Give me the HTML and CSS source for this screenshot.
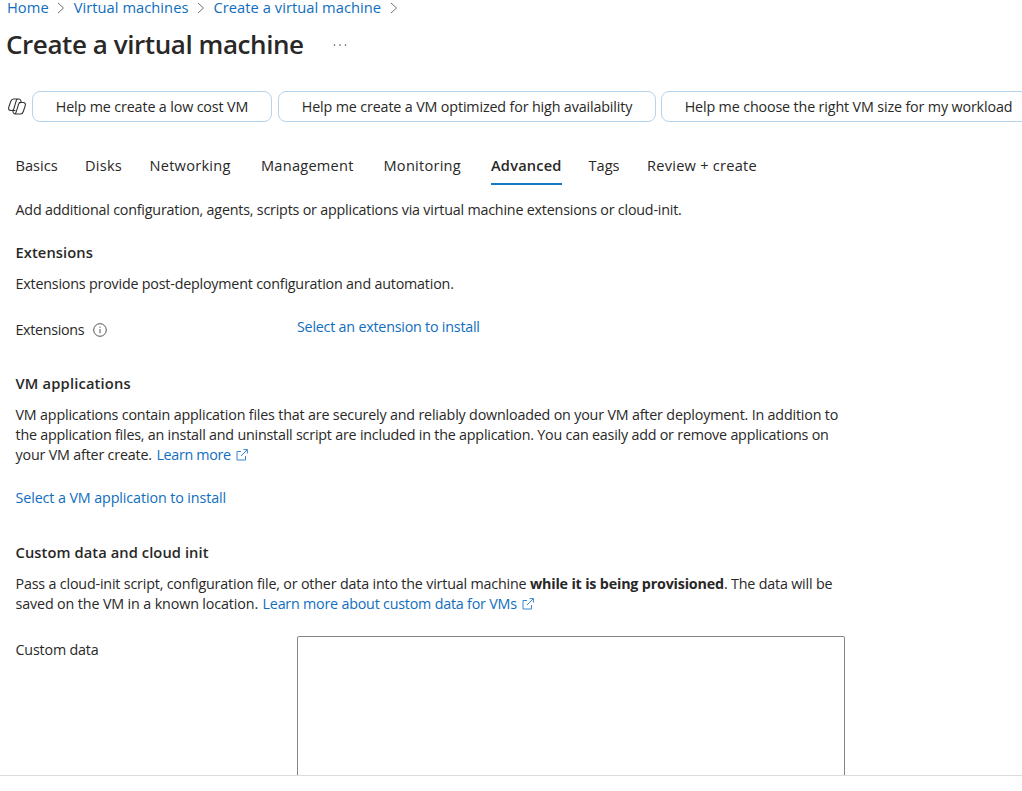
FILE: index.html
```html
<!DOCTYPE html>
<html lang="en">
<head>
<meta charset="utf-8">
<title>Create a virtual machine</title>
<link rel="stylesheet" href="styles.css">
</head>
<body>
<div class="page">
  <nav class="breadcrumb">
    <a class="crumb">Home</a>
    <svg class="chevron" viewBox="0 0 8 12"><path d="M1 1l5.500 5L1 11"/></svg>
    <a class="crumb">Virtual machines</a>
    <svg class="chevron" viewBox="0 0 8 12"><path d="M1 1l5.500 5L1 11"/></svg>
    <a class="crumb">Create a virtual machine</a>
    <svg class="chevron" viewBox="0 0 8 12"><path d="M1 1l5.500 5L1 11"/></svg>
  </nav>
  <header class="title-row">
    <h1 class="title">Create a virtual machine</h1>
    <svg class="more" viewBox="0 0 14 4"><circle cx="1.500" cy="2" r=".8"/><circle cx="7" cy="2" r=".8"/><circle cx="12.500" cy="2" r=".8"/></svg>
  </header>
  <div class="prompts">
    <svg class="copilot" viewBox="0 0 18 17"><path d="M5.500 1h5.300c1.200 0 1.700.6 2 1.600l.5 1.700M5.500 1C4 1 3.200 2 2.700 3.500L.8 9.200c-.6 2 .3 3.300 1.900 3.300h4.800M12.600 16H7.200c-1.200 0-1.700-.6-2-1.600l-.5-1.900M12.600 16c1.500 0 2.300-1 2.700-2.500l1.900-5.700c.6-2-.3-3.300-1.900-3.300h-4.600M9.500 1.100c-.8.4-1.200 1.100-1.500 2.200L5.900 10.700c-.3 1.200-.8 1.800-1.800 1.800M12.800 4.500c-1.400 0-1.900.7-2.300 1.900L8.300 13.700c-.3 1.100-.7 1.900-1.500 2.200"/></svg>
    <button class="prompt prompt-cost">Help me create a low cost VM</button>
    <button class="prompt prompt-avail">Help me create a VM optimized for high availability</button>
    <button class="prompt prompt-size">Help me choose the right VM size for my workload</button>
  </div>
  <div class="tabs">
    <a class="tab tab-basics">Basics</a>
    <a class="tab">Disks</a>
    <a class="tab">Networking</a>
    <a class="tab">Management</a>
    <a class="tab">Monitoring</a>
    <a class="tab active">Advanced</a>
    <a class="tab tab-tags">Tags</a>
    <a class="tab">Review + create</a>
  </div>
  <main class="content">
    <p class="intro">Add additional configuration, agents, scripts or applications via virtual machine extensions or cloud-init.</p>

    <h2>Extensions</h2>
    <p class="summary">Extensions provide post-deployment configuration and automation.</p>
    <div class="field extensions-field">
      <span class="label">Extensions<svg class="info" viewBox="0 0 14 14"><circle cx="7" cy="7" r="6.300"/><path d="M7 6v4.300M7 3.600v1.200"/></svg></span>
      <a class="link">Select an extension to install</a>
    </div>

    <h2 class="wide">VM applications</h2>
    <p>VM applications contain application files that are securely and reliably downloaded on your VM after deployment. In addition to<br>
    <span class="tight">the application files, an install and uninstall script are included in the application. You can easily add or remove applications on</span><br>
    your VM after create. <a class="link learn">Learn more<svg class="external" viewBox="0 0 12 12"><path d="M5 2.500H1v8.500h8.500V7M7.500.6h3.900v3.900M11.200.8L5 7"/></svg></a></p>
    <p class="select-app"><a class="link">Select a VM application to install</a></p>

    <h2>Custom data and cloud init</h2>
    <p>Pass a cloud-init script, configuration file, or other data into the virtual machine <b>while it is being provisioned</b>. The data will be<br>
    <span class="known">saved on the VM in a known location.</span> <a class="link learn-data">Learn more about custom data for VMs<svg class="external" viewBox="0 0 12 12"><path d="M5 2.500H1v8.500h8.500V7M7.500.6h3.900v3.900M11.200.8L5 7"/></svg></a></p>
    <div class="field data-field">
      <label class="label" for="custom-data">Custom data</label>
      <textarea class="data-input" id="custom-data"></textarea>
    </div>
  </main>
  <footer class="footer"></footer>
</div>
</body>
</html>
```
FILE: styles.css
```css
* {
  box-sizing: border-box;
}

body {
  margin: 0;
  font-family: "Open Sans", sans-serif;
  font-size: 14.3px;
  line-height: 20px;
  letter-spacing: -0.18px;
  color: #292827;
  background: #fff;
}

.page {
  display: flex;
  flex-direction: column;
  height: 791px;
  overflow: hidden;
  white-space: nowrap;
}

.breadcrumb {
  display: flex;
  align-items: flex-start;
  gap: 8.5px;
  height: 18px;
  padding-left: 7px;
  flex: none;
}

.crumb {
  font-size: 14.7px;
  line-height: 14px;
  letter-spacing: 0.04px;
  color: #106ebe;
}

.chevron {
  width: 8px;
  height: 12px;
  margin-top: 2px;
  fill: none;
  stroke: #747474;
}

.title-row {
  display: flex;
  align-items: center;
  gap: 29px;
  height: 36px;
  margin-top: 8px;
  padding-left: 6px;
  flex: none;
}

.title {
  margin: 0;
  font-size: 26px;
  font-weight: 600;
  line-height: 36px;
  letter-spacing: -0.43px;
}

.more {
  width: 14px;
  height: 4px;
  margin-top: 2px;
  fill: #444;
}

.prompts {
  display: flex;
  align-items: center;
  height: 31px;
  margin-top: 29px;
  padding-left: 8px;
  flex: none;
}

.copilot {
  width: 18px;
  height: 17px;
  margin-right: 6px;
  fill: none;
  stroke: #333;
  stroke-width: 1.1;
  flex: none;
}

.prompt {
  height: 31px;
  padding: 0;
  font: inherit;
  letter-spacing: -0.14px;
  color: inherit;
  background: #fff;
  border: 1px solid #b4d3ec;
  border-radius: 8px;
  flex: none;
}

.prompt-cost {
  width: 240px;
  margin-right: 6px;
}

.prompt-avail {
  width: 378px;
  margin-right: 5px;
}

.prompt-size {
  width: 375px;
}

.tabs {
  display: grid;
  grid-template-columns: 69.5px 64.5px 111.5px 122.5px 107.5px 97.5px 58.5px auto;
  justify-items: start;
  height: 30px;
  margin-top: 33px;
  padding-left: 15.5px;
  flex: none;
}

.tab {
  height: 30px;
  font-size: 14.6px;
  letter-spacing: 0.24px;
}

.tab-basics,
.tab-tags {
  letter-spacing: 0;
}

.active {
  font-weight: 600;
  letter-spacing: 0.2px;
  border-bottom: 2px solid #1478c4;
}

.content {
  height: 590px;
  padding: 15px 0 0 15.5px;
  overflow: hidden;
  flex: none;
}

p {
  margin: 0;
}

.intro,
.summary {
  letter-spacing: -0.2px;
}

h2 {
  margin: 22px 0 12px;
  font-size: 14.7px;
  font-weight: 600;
  line-height: 20px;
  letter-spacing: 0.08px;
}

.wide {
  letter-spacing: 0.18px;
}

.tight {
  letter-spacing: -0.21px;
}

.known {
  letter-spacing: -0.13px;
}

.field {
  display: grid;
  grid-template-columns: 281.5px 548px;
}

.extensions-field {
  margin: 23px 0 33px;
}

.extensions-field .label {
  display: flex;
  align-items: center;
  gap: 9px;
  margin-top: 3px;
  letter-spacing: -0.32px;
}

.link {
  color: #106ebe;
}

.extensions-field .link {
  letter-spacing: -0.22px;
}

.learn {
  margin-left: 1px;
  letter-spacing: -0.32px;
}

.learn-data {
  margin-left: 1px;
  letter-spacing: -0.21px;
}

.external {
  width: 12px;
  height: 12px;
  margin-left: 5px;
  fill: none;
  stroke: #3a86d0;
  vertical-align: -1px;
}

.info {
  width: 14px;
  height: 14px;
  fill: none;
  stroke: #555;
}

.select-app {
  margin: 23px 0 34px;
  letter-spacing: -0.1px;
}

.data-field {
  margin-top: 22px;
}

.data-field .label {
  margin-top: 4px;
}

.data-input {
  display: block;
  width: 548px;
  height: 180px;
  resize: none;
  border: 1px solid #858585;
  border-radius: 2px;
}

.footer {
  flex: 1;
  background: #fff;
  border-top: 1px solid #dcdcdc;
}
```
